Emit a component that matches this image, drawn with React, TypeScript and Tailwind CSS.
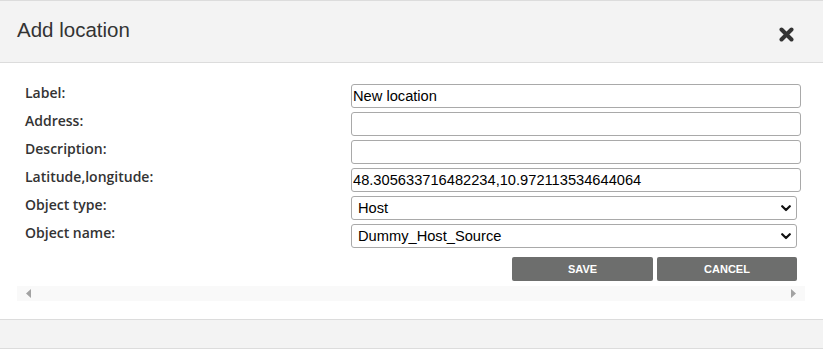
import React from "react";

const fields = [
  { label: "Label:", value: "New location" },
  { label: "Address:", value: "" },
  { label: "Description:", value: "" },
  { label: "Latitude,longitude:", value: "48.305633716482234,10.972113534644064" },
];

const selects = [
  { label: "Object type:", value: "Host" },
  { label: "Object name:", value: "Dummy_Host_Source" },
];

function Chevron() {
  return (
    <svg
      className="pointer-events-none absolute right-[6px] top-[9px]"
      width="10"
      height="7"
      viewBox="0 0 10 7"
    >
      <path d="M1.2 1.2 L5 5 L8.8 1.2" fill="none" stroke="#111" strokeWidth="2.2" strokeLinecap="round" strokeLinejoin="round" />
    </svg>
  );
}

export default function App() {
  return (
    <div className="w-[823px] h-[349px] bg-white flex flex-col overflow-hidden font-['Liberation_Sans',Arial,sans-serif]">
      <div className="h-[63px] shrink-0 flex items-center justify-between border-y border-[#dcdcdc] bg-[#f3f3f3] pl-[17px] pr-[29px]">
        <h1 className="text-[20.5px] text-[#333] leading-none -mt-[2px]">Add location</h1>
        <svg width="15" height="15" viewBox="0 0 15 15" className="mt-[6px]">
          <path d="M2.5 2.5 L12.5 12.5 M12.5 2.5 L2.5 12.5" stroke="#333" strokeWidth="4" strokeLinecap="round" />
        </svg>
      </div>

      <div className="flex-1 pt-[21px]">
        <div className="mx-[17px] w-[788px]">
          <div className="pl-[8px] grid grid-cols-[326px_450px] gap-y-[4px]">
            {fields.map((f) => (
              <React.Fragment key={f.label}>
                <div className="h-[24px] -mt-[1px] font-['Open_Sans',sans-serif] font-semibold text-[14px] leading-[19px] text-[#333]">
                  {f.label}
                </div>
                <input
                  readOnly
                  value={f.value}
                  className="h-[24px] w-[450px] border border-[#a9a9a9] rounded-[3px] px-[1px] text-[14.67px] text-black bg-white outline-none"
                />
              </React.Fragment>
            ))}
            {selects.map((s) => (
              <React.Fragment key={s.label}>
                <div className="h-[24px] -mt-[1px] font-['Open_Sans',sans-serif] font-semibold text-[14px] leading-[19px] text-[#333]">
                  {s.label}
                </div>
                <div className="relative w-[446px] h-[24px]">
                  <select
                    value={s.value}
                    onChange={() => {}}
                    className="appearance-none h-[24px] w-[446px] border border-[#a9a9a9] rounded-[3px] pl-[6px] text-[14.67px] text-black bg-white outline-none"
                  >
                    <option>{s.value}</option>
                  </select>
                  <Chevron />
                </div>
              </React.Fragment>
            ))}
          </div>

          <div className="mt-[9px] flex justify-end gap-[4px] pr-[8px]">
            <button className="h-[24px] w-[141px] rounded-[2px] bg-[#6d6e6d] text-white text-[11px] font-bold">SAVE</button>
            <button className="h-[24px] w-[140px] rounded-[2px] bg-[#6d6e6d] text-white text-[11px] font-bold">CANCEL</button>
          </div>

          <div className="mt-[5px] h-[15px] bg-[#f9f9f9] flex items-center justify-between px-[9px]">
            <svg width="5" height="9" viewBox="0 0 5 9">
              <path d="M5 0 L0 4.5 L5 9 Z" fill="#a3a3a3" />
            </svg>
            <svg width="5" height="9" viewBox="0 0 5 9">
              <path d="M0 0 L5 4.5 L0 9 Z" fill="#a3a3a3" />
            </svg>
          </div>
        </div>
      </div>

      <div className="h-[30px] shrink-0 border-y border-[#dcdcdc] bg-[#f3f3f3]" />
    </div>
  );
}
